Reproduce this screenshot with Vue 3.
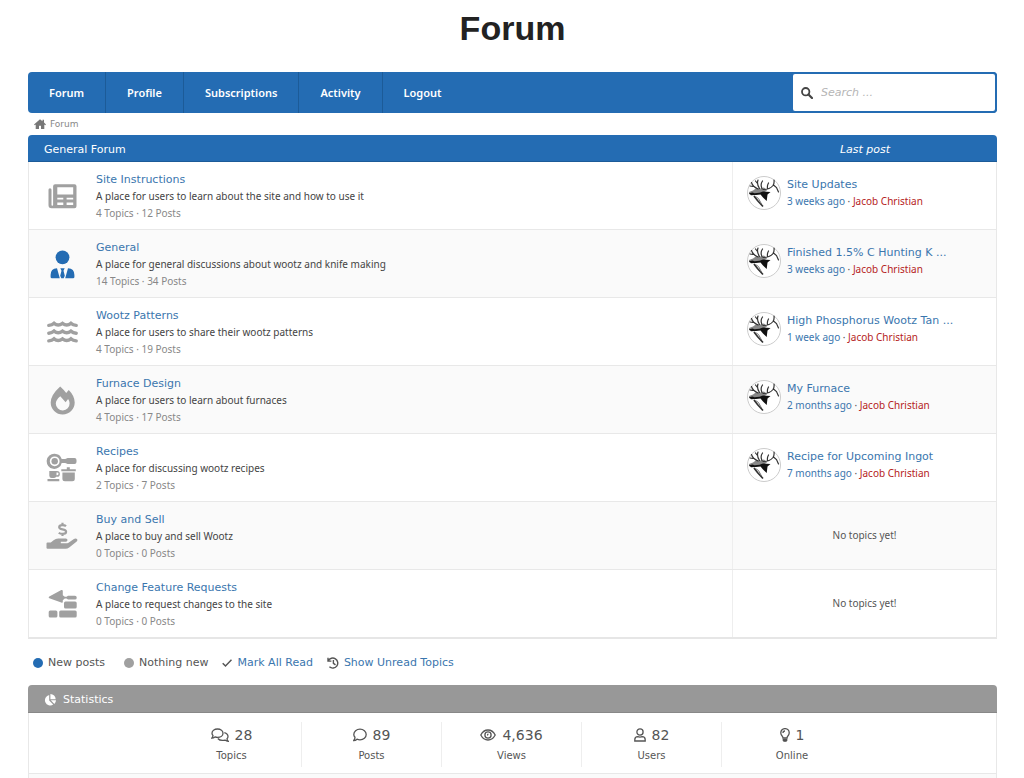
<script setup>
const navItems = ['Forum', 'Profile', 'Subscriptions', 'Activity', 'Logout']

const forums = [
  { icon: 'news', title: 'Site Instructions', text: 'A place for users to learn about the site and how to use it', topics: 4, posts: 12, last: { title: 'Site Updates', when: '3 weeks ago' } },
  { icon: 'user', title: 'General', text: 'A place for general discussions about wootz and knife making', topics: 14, posts: 34, fresh: true, last: { title: 'Finished 1.5% C Hunting K ...', when: '3 weeks ago' } },
  { icon: 'waves', title: 'Wootz Patterns', text: 'A place for users to share their wootz patterns', topics: 4, posts: 19, last: { title: 'High Phosphorus Wootz Tan ...', when: '1 week ago' } },
  { icon: 'fire', title: 'Furnace Design', text: 'A place for users to learn about furnaces', topics: 4, posts: 17, last: { title: 'My Furnace', when: '2 months ago' } },
  { icon: 'kitchen', title: 'Recipes', text: 'A place for discussing wootz recipes', topics: 2, posts: 7, last: { title: 'Recipe for Upcoming Ingot', when: '7 months ago' } },
  { icon: 'hand', title: 'Buy and Sell', text: 'A place to buy and sell Wootz', topics: 0, posts: 0 },
  { icon: 'trowel', title: 'Change Feature Requests', text: 'A place to request changes to the site', topics: 0, posts: 0 },
]

const stats = [
  { icon: 'comments', width: 18, value: '28', label: 'Topics' },
  { icon: 'comment', width: 14, value: '89', label: 'Posts' },
  { icon: 'eye', width: 16, value: '4,636', label: 'Views' },
  { icon: 'person', width: 12, value: '82', label: 'Users' },
  { icon: 'bulb', width: 10, value: '1', label: 'Online' },
]
</script>

<template>
  <main class="page">
    <h1>Forum</h1>

    <div class="menubar">
      <nav>
        <a v-for="item in navItems" :key="item" href="#">{{ item }}</a>
      </nav>
      <form class="search" role="search" @submit.prevent>
        <label for="search" aria-label="Search">
          <svg width="12" height="12" viewBox="0 0 12 12"><circle cx="4.7" cy="4.7" r="3.7" fill="none" stroke="#444" stroke-width="1.8" /><path d="M7.5 7.5 11 11" stroke="#444" stroke-width="2.2" stroke-linecap="round" /></svg>
        </label>
        <input id="search" type="text" placeholder="Search ...">
      </form>
    </div>

    <div class="crumbs">
      <svg width="12" height="10" viewBox="0 0 12 10"><path fill="#777" d="M6 .2 0 5.400l.8.800.9-.7V10h3.300V6.800h2V10h3.300V5.500l.9.700.8-.8-2-1.800V.8H8.500v1.500z" /></svg>
      <a href="#">Forum</a>
    </div>

    <section class="board">
      <header class="bar">
        <h2>General Forum</h2>
        <div class="last-head">Last post</div>
      </header>
      <article v-for="f in forums" :key="f.title" class="row">
        <div class="info">
          <svg class="icon" :class="{ fresh: f.fresh }" width="32" height="32" viewBox="0 0 32 32">
            <template v-if="f.icon === 'news'">
              <path fill-rule="evenodd" d="M10 4.300h18.500q2 0 2 2v20q0 2-2 2H5.500q-3 0-3-3V9.700q0-1.500 1.500-1.500t1.500 1.500V25q0 .8.800.8t.8-.8V6.300q0-2 2-2zM11.300 7.300v7.200h15.900V7.300zM11.300 17.700v1.800h6v-1.800zM20.600 17.700v1.800h6.600v-1.800zM11.300 22.600v2.400h6v-2.400zM20.600 22.600v2.400h6.600v-2.400z" />
            </template>
            <template v-else-if="f.icon === 'user'">
              <circle cx="16.500" cy="9.300" r="6.900" />
              <path d="M11 20.200 13.800 30.300H6q-1.400 0-1.400-1.400v-2q0-6.300 6.400-6.700zM22 20.200 19.200 30.300H27q1.400 0 1.400-1.400v-2q0-6.300-6.400-6.700zM14.300 20.200h4.400l-1.200 2.600 1.300 5-1.100 2.500h-2.400l-1.100-2.500 1.300-5z" />
            </template>
            <g v-else-if="f.icon === 'waves'" fill="none" stroke="#a0a0a0" stroke-width="3.400" stroke-linecap="round">
              <path v-for="y in [8.500, 16.300, 24]" :key="y" :d="`M2.800 ${y + 0.9}q3.200-.2 5.300-2.100 4 3.200 8.400 0 4.200 3.200 8.400 0 2.200 1.900 5.300 2.100`" />
            </g>
            <path v-else-if="f.icon === 'fire'" fill-rule="evenodd" d="M14.200 2.500q4 3.600 6 6.600 1.200-1.800 2.600-3.100 5.900 6 5.900 12.600A12 12 0 0 1 4.700 18.500Q4.700 11 14.200 2.500zM14.300 12.300Q9.800 16 9.800 19.700a6.900 6.900 0 0 0 13.800-.4q0-2.200-1.500-4.300l-2.500 3.300z" />
            <template v-else-if="f.icon === 'kitchen'">
              <path fill-rule="evenodd" d="M8.700 1.700a7.600 7.600 0 0 1 7 5.200h3.500l2.500-1h6.800q2 0 2 2v2q0 2-2 2h-6.800l-2.500-1h-3.500a7.600 7.600 0 1 1-7-9.200zM8.700 4.400a4.900 4.900 0 1 0 0 9.800 4.900 4.900 0 0 0 0-9.800z" />
              <circle cx="8.700" cy="9.300" r="3.200" />
              <path fill-rule="evenodd" d="M3.300 19h7.700a2.900 2.900 0 0 1 0 5.800h-.8q-.8 1.300-2.500 1.300h-2q-2.400 0-2.400-2.400zM10.500 20.500v2.700h.7a1.300 1.300 0 0 0 0-2.700zM1.500 27h11.800v2.300H1.500zM15.300 17.300h5.500v-2h3v2h6v2H15.300zM16.400 20.500h12.400v6.300q0 2.500-2.500 2.500h-7.400q-2.500 0-2.500-2.500z" />
            </template>
            <template v-else-if="f.icon === 'hand'">
              <path d="M20 6.200q-1-1-3.500-1-3.300 0-3.300 2.100 0 1.500 3.300 2.100 3.600.6 3.600 2.400 0 2.100-3.500 2.100-2.500 0-3.800-1.200M16.500 2.800v2.600M16.500 13.600v2.500" fill="none" stroke="#a0a0a0" stroke-width="2.200" />
              <path d="M1.500 22.500h3.300l2.800-2.300q2-1.700 4.600-1.700h7.600q1.700 0 1.700 1.600t-1.700 1.700h-5v1.400h6.400q.9 0 1.700-.6l5-3.500q1.300-.9 2.600-.3 1.700 1 .2 2.700l-7.500 6q-1.600 1.300-3.600 1.300H1.500q-1 0-1-1v-4.300q0-1 1-1z" />
            </template>
            <template v-else>
              <path d="M16.800 3.300v4l2 1.400h1.700l1.500-1h7q1.700 0 1.700 1.700v.5q0 1.700-1.700 1.700h-7l-1.500-1h-1.700l-2 1.600v1.600q0 1.500-1.500.7L3.300 10.200q-1.500-.8 0-1.700l12-6.400q1.500-.700 1.500 1.200z" />
              <rect x="18" y="13.600" width="12.700" height="7" rx="1.500" />
              <rect x="2.700" y="22.600" width="8.700" height="7" rx="1.500" />
              <rect x="13.200" y="22.600" width="17.500" height="7" rx="1.500" />
            </template>
          </svg>
          <div>
            <h3><a href="#">{{ f.title }}</a></h3>
            <p class="desc">{{ f.text }}</p>
            <p class="count">{{ f.topics }} Topics · {{ f.posts }} Posts</p>
          </div>
        </div>
        <div v-if="f.last" class="last">
          <svg class="avatar" width="34" height="34" viewBox="0 0 34 34">
            <circle cx="17" cy="17" r="16.500" fill="#fff" stroke="#ccc" />
            <path fill="#888" d="m2 16 4-1.500 3.500-2.500 4 .5 3.500-1 3 3-4 2.500-9 1-5 .2z" />
            <path fill="#111" d="m2 17.200 3.500-.8 2 .8 5-.5 3.500-1.200 7.500.5-3 2.500-.8 6.500-3.700-3.500-2.500-3-4.500.5-5 .3z" />
            <path fill="none" stroke="#333" stroke-width="1.200" stroke-linecap="round" d="M11 13Q5.500 10.500 4.500 6.500M6 10.500 3 10M12.500 12.500Q9.500 8 11 4M10.500 7.500 8.500 5M15 12.500q-2-4 .5-7.500M16 13.500Q23 13.500 26 9.500 27.500 7 27 4M26.500 9l3 2.500 2 4.500M20.500 12.500Q20 9.500 21.500 7" />
            <path fill="none" stroke="#333" stroke-width="1.700" d="m7 20 3.500 4.500 5.500 6" />
            <path fill="none" stroke="#777" d="m8.500 20.500 3 2 3 5.500" />
          </svg>
          <div>
            <a class="last-title" href="#">{{ f.last.title }}</a>
            <p><a href="#">{{ f.last.when }}</a> · <a class="author" href="#">Jacob Christian</a></p>
          </div>
        </div>
        <div v-else class="last none">No topics yet!</div>
      </article>
    </section>

    <div class="legend">
      <span><i class="dot blue"></i>New posts</span>
      <span><i class="dot"></i>Nothing new</span>
      <a href="#"><svg width="10" height="12" viewBox="0 0 10 12"><path d="m.7 6.200 2.800 2.800 6-6.200" fill="none" stroke="#555" stroke-width="1.500" /></svg>Mark All Read</a>
      <a href="#"><svg width="12" height="12" viewBox="0 0 12 12"><path d="M1 .8v3.300h3.400M1.300 3.800A5 5 0 1 1 2.400 9.800M6.400 3v3.300l2.100 1.600" fill="none" stroke="#555" stroke-width="1.400" /></svg>Show Unread Topics</a>
    </div>

    <section class="statistics">
      <header class="bar gray">
        <svg width="12" height="12" viewBox="0 0 12 12"><path fill="#fff" d="M5.200 1v5.600l4 4A5.300 5.300 0 1 1 5.200 1zM6.400 0A5.300 5.300 0 0 1 11.700 5.200H6.400zM6.800 6.300H12q-.1 2.200-1.600 3.700z" /></svg>
        <h2>Statistics</h2>
      </header>
      <div class="stats">
        <div v-for="s in stats" :key="s.label" class="stat">
          <div class="figure">
            <svg height="14" :width="s.width" :viewBox="`0 0 ${s.width} 14`">
              <path v-if="s.icon === 'comments'" d="M6.500 1C9.600 1 12 2.800 12 5.200S9.600 9.400 6.500 9.400q-1.400 0-2.500-.5-1.500 1.200-3.200 1.200Q2 8.800 2 7.500 1 6.500 1 5.200C1 2.800 3.400 1 6.500 1zM13.300 4.600q3.700 1 3.700 4 0 1.200-1 2.200 0 1.300 1.200 2.500-1.700 0-3.200-1.200-4.700 1.200-7.200-1.600" />
              <path v-else-if="s.icon === 'comment'" d="M7 1.200c3.500 0 6.200 2.400 6.200 5.300S10.500 11.800 7 11.800q-1.700 0-3-.6-1.500 1.500-3.400 1.500Q2 11 2 9.300.8 8 .8 6.500C.8 3.600 3.500 1.200 7 1.200z" />
              <g v-else-if="s.icon === 'eye'"><path d="M.8 7Q3.400 2 8 2t7.200 5Q12.600 12 8 12T.8 7z" /><circle cx="8" cy="7" r="3.100" /><path d="M7 7q1 0 1-1.200" /></g>
              <g v-else-if="s.icon === 'person'"><circle cx="6" cy="4" r="3.100" /><path d="M.8 13v-1.200q0-3.100 3-3.100 2.200.7 4.400 0 3 0 3 3.100V13z" /></g>
              <g v-else><path d="M3 10Q3 8.800 1.600 7.300.8 6.200.8 4.800a4.200 4.200 0 0 1 8.400 0q0 1.400-.8 2.500Q7 8.800 7 10zM3 5q0-2 2-2" /><path fill="#444" d="M3.300 11.500h3.400v1l-.7.700H4l-.7-.7z" /></g>
            </svg>
            {{ s.value }}
          </div>
          <div class="stat-label">{{ s.label }}</div>
        </div>
      </div>
      <div class="foot"></div>
    </section>
  </main>
</template>

<style>
body { margin: 0; background: #fff; overflow: hidden; }
</style>

<style scoped>
* { box-sizing: border-box; }
.page {
  padding: 0 27px 0 28px;
  font-family: Verdana, "DejaVu Sans", sans-serif;
  font-size: 11px;
  color: #555;
}
h1, h2, h3, p { margin: 0; font-weight: 400; }
a { color: #3a76ae; text-decoration: none; }
h1 {
  padding-top: 8px;
  font: 700 34px/40px "Liberation Sans", Arial, sans-serif;
  color: #222;
  text-align: center;
}
.menubar {
  display: flex;
  justify-content: space-between;
  margin-top: 24px;
  height: 41px;
  background: #246cb3;
  border-radius: 4px;
}
nav { display: flex; }
nav a {
  padding: 0 21px;
  border-right: 1px solid #1c5b98;
  line-height: 41px;
  font-family: "Noto Sans", sans-serif;
  font-weight: 600;
  color: #fff;
}
nav a:last-child { border-right: 0; }
.search {
  display: flex;
  align-items: center;
  width: 206px;
  padding-left: 8px;
  background: #fff;
  border: 2px solid #246cb3;
  border-radius: 4px;
}
.search label { display: flex; }
.search input {
  flex: 1;
  min-width: 0;
  padding: 0 8px;
  border: 0;
  outline: 0;
  background: none;
  font: 11px "DejaVu Sans", sans-serif;
}
.search input::placeholder { color: #b5b5b5; font-style: italic; }
.crumbs {
  display: flex;
  align-items: center;
  gap: 4px;
  height: 22px;
  padding-left: 6px;
  font-size: 9px;
}
.crumbs a { color: #888; }
.bar {
  display: flex;
  align-items: center;
  height: 27px;
  padding: 2px 0 0 16px;
  background: #246cb3;
  border-bottom: 1px solid #1c5b98;
  border-radius: 4px 4px 0 0;
  color: #fff;
}
.bar h2 { flex: 1; font-size: 11px; }
.last-head { width: 264px; text-align: center; font-style: italic; }
.row {
  display: flex;
  height: 68px;
  border: 1px solid #e8e8e8;
  border-top: 0;
}
.row:nth-child(odd) { background: #fafafa; }
.row:last-child { height: 69px; border-bottom: 2px solid #e6e6e6; }
.info { flex: 1; display: flex; gap: 18px; padding: 9px 0 0 17px; }
.icon { margin-top: 9px; fill: #a0a0a0; }
.icon.fresh { fill: #246cb3; }
h3 { font-size: 11px; line-height: 17px; }
.desc, .count { font-family: "Noto Sans", sans-serif; font-size: 10px; line-height: 17px; }
.desc { color: #444; }
.count { color: #888; }
.last {
  display: flex;
  align-items: center;
  gap: 6px;
  width: 264px;
  padding: 0 0 5px 14px;
  border-left: 1px solid #eee;
  font-family: "Noto Sans", sans-serif;
  font-size: 10px;
  line-height: 17px;
}
.last-title { display: block; font-family: Verdana, "DejaVu Sans", sans-serif; font-size: 11px; }
.last .author { color: #b52222; }
.last.none { justify-content: center; padding: 0; }
.legend {
  display: flex;
  align-items: center;
  height: 46px;
  padding: 1px 5px 0;
  gap: 14px;
}
.legend span, .legend a { display: flex; align-items: center; gap: 5px; }
.legend span:first-child { margin-right: 5px; }
.dot { width: 10px; height: 10px; border-radius: 50%; background: #a0a0a0; }
.dot.blue { background: #246cb3; }
.gray { gap: 7px; height: 28px; background: #989898; border-color: #888; }
.stats {
  display: flex;
  justify-content: center;
  padding: 9px 1px 6px 0;
  border: 1px solid #e8e8e8;
  border-top: 0;
}
.stat {
  width: 140px;
  height: 45px;
  border-right: 1px solid #eee;
  text-align: center;
}
.stat:last-child { border-right: 0; }
.figure {
  display: flex;
  align-items: center;
  justify-content: center;
  gap: 6px;
  height: 25px;
  font-size: 14px;
}
.figure svg { fill: none; stroke: #555; stroke-width: 1.3; }
.stat-label { font-size: 10px; line-height: 18px; }
.foot { height: 5px; background: #fafafa; border: 1px solid #e8e8e8; border-top: 0; }
</style>
